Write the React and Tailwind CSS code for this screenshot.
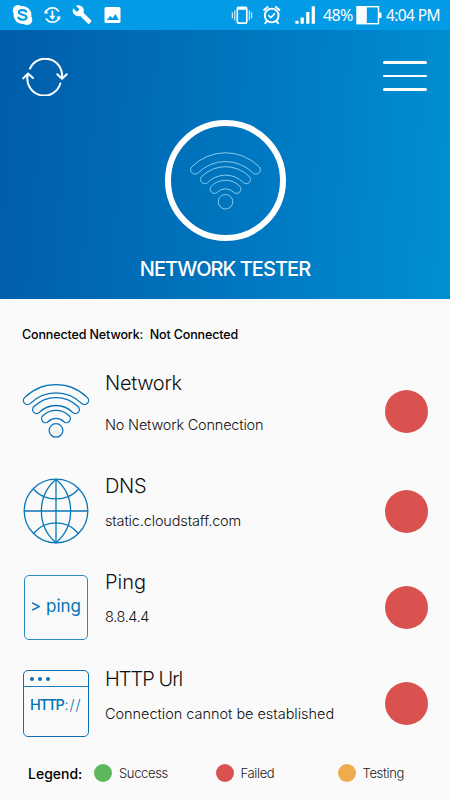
import React from 'react';

// closed outline of a 90° wifi arc around (36, 47)
const band = (outer, inner) => {
  const k = Math.SQRT1_2;
  const cap = (outer - inner) / 2;
  return [
    `M${36 - outer * k} ${47 - outer * k}`,
    `A${outer} ${outer} 0 0 1 ${36 + outer * k} ${47 - outer * k}`,
    `A${cap} ${cap} 0 0 1 ${36 + inner * k} ${47 - inner * k}`,
    `A${inner} ${inner} 0 0 0 ${36 - inner * k} ${47 - inner * k}`,
    `A${cap} ${cap} 0 0 1 ${36 - outer * k} ${47 - outer * k}`,
    'Z',
  ].join(' ');
};

const WifiIcon = ({ className, stroke, strokeWidth }) => (
  <svg viewBox="0 0 72 58" className={className} fill="none" stroke={stroke} strokeWidth={strokeWidth}>
    <path d={band(44.4, 36.2)} />
    <path d={band(31.4, 23.5)} />
    <path d={band(18.7, 10.7)} />
    <circle cx="36" cy="48.4" r="6.8" />
  </svg>
);

const GlobeIcon = () => (
  <svg viewBox="0 0 72 72" className="h-[72px] w-[72px]" fill="none" stroke="#0878b8" strokeWidth="1.3">
    <circle cx="36" cy="36" r="31.8" />
    <path d="M36 4.2v63.6M4.2 36h63.6" />
    <path d="M36 4.2C16.5 21 16.5 51 36 67.8C55.5 51 55.5 21 36 4.2" />
    <path d="M13.5 14.2C25 27.2 47 27.2 58.500 14.2M13.5 58.500C25 44.2 47 44.2 58.500 58.500" />
  </svg>
);

const PingIcon = () => (
  <div className="flex h-[65px] w-[64px] items-center justify-center rounded-[5px] border border-[#2a8ac4]">
    <span className="pr-px text-[17px] whitespace-pre text-[#0072b5]">&gt; ping</span>
  </div>
);

const HttpIcon = () => (
  <div className="flex h-[67px] w-[66px] flex-col rounded-[5px] border border-[#0a6fb4]">
    <div className="flex h-4 items-center gap-1 border-b border-[#1a80bd] pl-[6px]">
      <i className="h-1 w-1 rounded-full bg-[#0a6fb4]" />
      <i className="h-1 w-1 rounded-full bg-[#0a6fb4]" />
      <i className="h-1 w-1 rounded-full bg-[#0a6fb4]" />
    </div>
    <span className="pt-[7px] pl-[6px] text-[14.5px] leading-[22px] text-[#0072b5]">
      <span className="font-medium tracking-[-1.4px]">HTTP</span>
      <span className="pl-px font-light tracking-[1px]">://</span>
    </span>
  </div>
);

const StatusBar = () => (
  <div className="flex h-[30px] items-center bg-[#039be5] text-white">
    <svg viewBox="0 0 130 30" className="h-[30px] w-[130px] shrink-0" fill="none">
      {/* skype */}
      <circle cx="22.5" cy="15" r="9" fill="#fff" />
      <circle cx="18" cy="10.3" r="5.3" fill="#fff" />
      <circle cx="27" cy="19.8" r="5.3" fill="#fff" />
      <path d="M26.200 11.800C25.200 9.600 18.900 9.400 18.900 12.300C18.900 15.600 26.600 13.800 26.600 17.300C26.600 20.500 19.600 20.500 18.500 17.600" stroke="#039be5" strokeWidth="2.1" strokeLinecap="round" />
      {/* download sync */}
      <path d="M46 11.600A7.300 7.300 0 0 1 58.800 11.600M58.800 18.400A7.300 7.300 0 0 1 46 18.400" stroke="#fff" strokeWidth="1.7" />
      <path d="M44.200 13.800l4.300-.6-3.400-3.400zM60.600 16.200l-4.300.6 3.400 3.400z" fill="#fff" />
      <path d="M52.400 10.500v8" stroke="#fff" strokeWidth="1.700" />
      <path d="M49.300 15.700h6.200l-3.100 4z" fill="#fff" />
      {/* wrench */}
      <g transform="translate(71.8 4.2) scale(.86)">
        <path d="M22.700 19l-9.100-9.100c.9-2.300.4-5-1.500-6.900-2-2-5-2.400-7.400-1.300L9 6 6 9 1.600 4.700C.4 7.100.9 10.100 2.900 12.100c1.900 1.900 4.600 2.400 6.900 1.500l9.100 9.100c.4.4 1 .4 1.400 0l2.300-2.300c.5-.4.5-1.100.1-1.400z" fill="#fff" />
      </g>
      <rect x="104.500" y="7" width="16" height="16" rx="1.5" fill="#fff" />
      <path d="M106.800 20l3.400-4.200 2.200 2.400 3.200-4.200 3.300 6z" fill="#039be5" />
    </svg>
    <svg viewBox="0 0 90 30" className="ml-auto h-[30px] w-[90px] shrink-0" fill="none" stroke="#fff">
      {/* vibrate */}
      <rect x="6.3" y="7.3" width="9.5" height="15.8" rx="1.2" strokeWidth="1.6" />
      <path d="M6.500 8.600h9" strokeWidth="2.4" />
      <path d="M3.800 10.300v10M1.300 12.300v6M18.300 10.300v10M20.700 12.300v6" strokeWidth="1" />
      {/* alarm */}
      <circle cx="40.7" cy="15.500" r="6.9" strokeWidth="1.9" />
      <path d="M32.500 10.500l4.700-4M49 10.500l-4.700-4M36 21l-2.200 2.800M45.400 21l2.200 2.800" strokeWidth="2" />
      <path d="M37.200 15.200l2.700 2.400 4-4.200" strokeWidth="1.6" />
      {/* signal */}
      <path d="M66 20.800v3M71.200 17.500v6.300M76.800 12v11.800M82.300 6.300v17.500" strokeWidth="3.2" />
    </svg>
    <span className="w-[34px] pl-[2px] font-['Noto_Sans'] text-[16px] leading-[30px] tracking-[-0.6px]">48%</span>
    <svg viewBox="0 0 26 20" className="ml-[1px] h-5 w-[26px] shrink-0">
      <rect x="1" y="1.700" width="21.5" height="17" fill="none" stroke="#fff" strokeWidth="1.4" />
      <path d="M1 2h9.800v16.500H1zM22.500 7.500h3v5.500h-3z" fill="#fff" />
    </svg>
    <span className="mr-[10px] ml-[4px] w-[54px] font-['Noto_Sans'] text-[15.5px] leading-[30px] tracking-[-0.6px] whitespace-nowrap">4:04 PM</span>
  </div>
);

const Header = () => (
  <header className="flex h-[269px] flex-col items-center bg-[linear-gradient(94deg,#005dab_0%,#0077c0_55%,#0090d2_100%)] text-white">
    <div className="flex w-full justify-between pt-7 pr-[23px] pl-[22px]">
      <svg viewBox="0 0 46 38" className="h-[38px] w-[46px]" fill="none" stroke="#fff" strokeWidth="2" strokeLinecap="round" strokeLinejoin="round">
        <path d="M8 10.500A16.800 16.800 0 0 1 39.800 20.500M35.300 16.300l4.700 4.500 4.800-4.600" />
        <path d="M38.300 25.500A16.800 16.800 0 0 1 6 16M1.200 20.400l4.800-4.900 5 4.500" />
      </svg>
      <div className="mt-[3px] flex w-[44px] flex-col gap-[11px] self-start">
        <i className="h-[2.6px] rounded-full bg-white" />
        <i className="h-[2.6px] rounded-full bg-white" />
        <i className="h-[2.6px] rounded-full bg-white" />
      </div>
    </div>
    <div className="mt-[24px] flex h-[121px] w-[121px] shrink-0 items-center justify-center rounded-full border-[6.5px] border-white">
      <WifiIcon className="h-[62px] w-[77px]" stroke="#9ad8f5" strokeWidth="0.8" />
    </div>
    <h1 className="mt-[15px] text-[20px] leading-[26px] font-medium tracking-[-0.95px] whitespace-nowrap">NETWORK TESTER</h1>
  </header>
);

const tests = [
  {
    title: 'Network',
    result: 'No Network Connection',
    icon: <WifiIcon className="h-[58px] w-[72px]" stroke="#0874b6" strokeWidth="1.3" />,
    row: 'h-[100px]',
    text: 'gap-[18px] pb-[15px]',
    titleCls: 'tracking-[-0.3px]',
    resultCls: 'tracking-[-0.2px]',
  },
  {
    title: 'DNS',
    result: 'static.cloudstaff.com',
    icon: <GlobeIcon />,
    row: 'mt-[2px] h-24',
    text: 'gap-[11px] pb-[15px]',
    titleCls: 'tracking-[-0.3px]',
    resultCls: 'tracking-[-0.15px]',
  },
  {
    title: 'Ping',
    result: '8.8.4.4',
    icon: <PingIcon />,
    row: 'h-24',
    text: 'gap-[11px] pb-[15px]',
    titleCls: '',
    resultCls: 'tracking-[-0.4px]',
  },
  {
    title: 'HTTP Url',
    result: 'Connection cannot be established',
    icon: <HttpIcon />,
    row: 'h-[97px]',
    text: 'gap-[11px] pb-[15px]',
    titleCls: 'tracking-[-1px]',
    resultCls: 'tracking-[-0.03px]',
  },
];

const TestRow = ({ item }) => (
  <div className={`flex items-center ${item.row}`}>
    <div className="flex w-[72px] shrink-0 justify-center">{item.icon}</div>
    <div className={`ml-[13px] flex flex-1 flex-col whitespace-nowrap text-[#111] ${item.text}`}>
      <h2 className={`text-[20px] leading-[24px] font-light ${item.titleCls}`}>{item.title}</h2>
      <p className={`text-[14.5px] leading-[24px] font-light ${item.resultCls}`}>{item.result}</p>
    </div>
    <span className="h-[43px] w-[43px] shrink-0 rounded-full bg-[#d9524f]" />
  </div>
);

export default function App() {
  return (
    <div className="flex h-[800px] w-[450px] flex-col overflow-hidden bg-[#fafafa] font-['Inter',sans-serif]">
      <StatusBar />
      <Header />
      <main className="pr-[22px] pl-5">
        <p className="h-[62px] pt-[26px] pl-[2px] text-[12.5px] leading-5 font-medium tracking-[-0.13px] whitespace-pre text-black">Connected Network:  Not Connected</p>
        {tests.map((item) => (
          <TestRow key={item.title} item={item} />
        ))}
      </main>
      <footer className="mt-[9px] flex h-6 items-center pl-7 text-[13px] text-[#222]">
        <span className="w-[66px] text-[14px] font-medium text-black">Legend:</span>
        <div className="flex w-[121.5px] items-center gap-[7px] font-light tracking-[-0.35px]">
          <i className="h-[18px] w-[18px] rounded-full bg-[#5cb85c]" />
          <span className="pt-px">Success</span>
        </div>
        <div className="flex w-[122px] items-center gap-[7px] font-light tracking-[-0.35px]">
          <i className="h-[18px] w-[18px] rounded-full bg-[#d9524f]" />
          <span className="pt-px">Failed</span>
        </div>
        <div className="flex items-center gap-[7px] font-light tracking-[-0.35px]">
          <i className="h-[18px] w-[18px] rounded-full bg-[#eeac4f]" />
          <span className="pt-px">Testing</span>
        </div>
      </footer>
    </div>
  );
}
